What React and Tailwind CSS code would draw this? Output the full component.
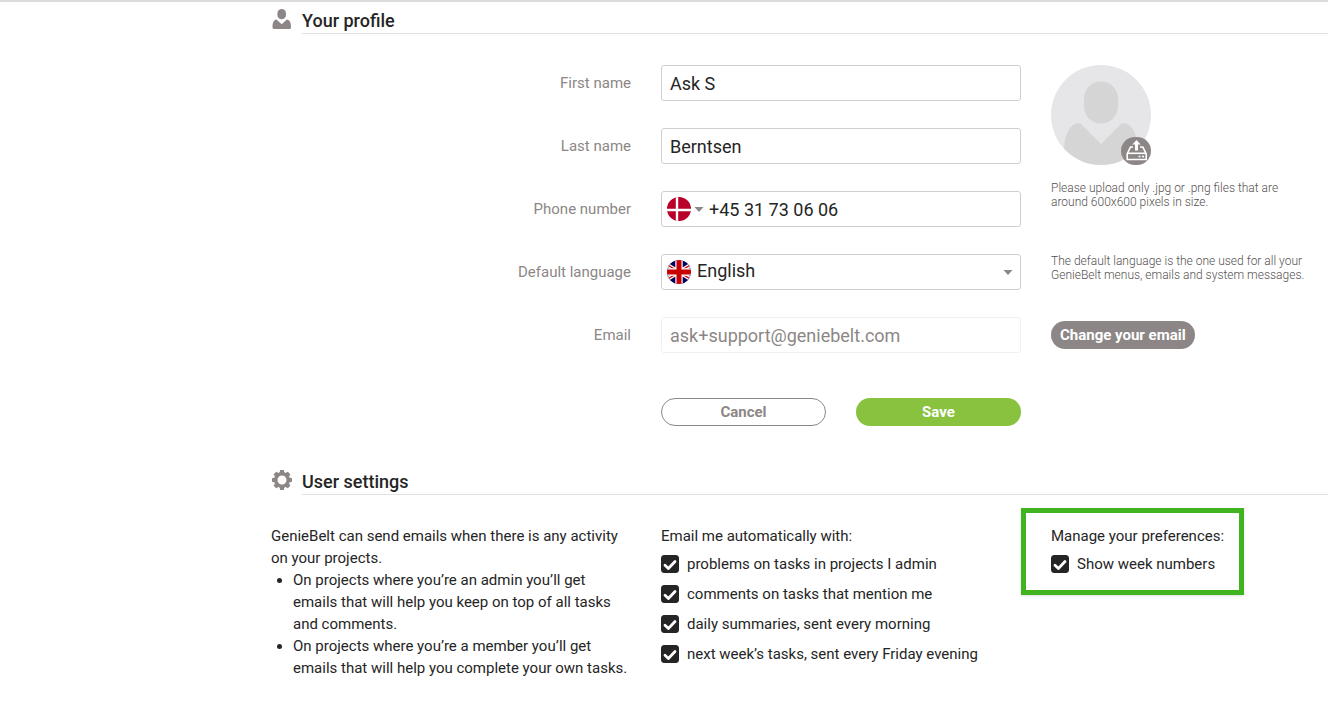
import React, { useState } from 'react'

const emailOptions = [
  { id: 'problems', label: 'problems on tasks in projects I admin' },
  { id: 'comments', label: 'comments on tasks that mention me' },
  { id: 'daily', label: 'daily summaries, sent every morning' },
  { id: 'weekly', label: 'next week’s tasks, sent every Friday evening' },
]

const UserIcon = () => (
  <svg viewBox="0 0 20 20" className="w-5 h-5" fill="#8c8786" aria-hidden="true">
    <rect x="5.4" y="0" width="8.6" height="10.2" rx="4.3" />
    <path d="M4.5 10.4 9.7 15.2 14.9 10.4C17.6 10.6 19 13.5 19 17.8V18.6Q19 20 17.6 20H1.9Q.5 20 .5 18.6V17.8C.5 13.5 1.8 10.6 4.5 10.4Z" />
  </svg>
)

const GearIcon = () => (
  <svg viewBox="-10 -10 20 20" className="w-5 h-5" aria-hidden="true">
    <circle r="6.2" fill="none" stroke="#8c8786" strokeWidth="3.4" />
    <g fill="#8c8786">
      {[0, 45, 90, 135, 180, 225, 270, 315].map((deg) => (
        <path key={deg} d="M-2.6 -7 -1.8 -10H1.8L2.6 -7Z" transform={`rotate(${deg})`} />
      ))}
    </g>
  </svg>
)

const DanishFlag = () => (
  <svg viewBox="0 0 24 24" className="w-6 h-6" aria-hidden="true">
    <clipPath id="dk"><circle cx="12" cy="12" r="12" /></clipPath>
    <g clipPath="url(#dk)">
      <rect width="24" height="24" fill="#b90028" />
      <path d="M10 0V24M0 13H24" stroke="#fff" strokeWidth="2.4" />
    </g>
  </svg>
)

const BritishFlag = () => (
  <svg viewBox="0 0 24 24" className="w-6 h-6" aria-hidden="true">
    <clipPath id="gb"><circle cx="12" cy="12" r="12" /></clipPath>
    <g clipPath="url(#gb)">
      <rect width="24" height="24" fill="#00005c" />
      <path d="M-4 2 28 22M28 2 -4 22" stroke="#fff" strokeWidth="4" />
      <path d="M-4 2 28 22M28 2 -4 22" stroke="#c80000" strokeWidth="1.2" />
      <path d="M12 0V24M0 12H24" stroke="#fff" strokeWidth="7.4" />
      <path d="M12 0V24M0 12H24" stroke="#c80000" strokeWidth="5" />
    </g>
  </svg>
)

const Caret = () => (
  <svg viewBox="0 0 10 5" className="w-[10px] h-[5px]" aria-hidden="true">
    <path d="M.5 0H9.5L5 5Z" fill="#8c8786" />
  </svg>
)

const Avatar = () => (
  <svg viewBox="0 0 100 100" className="w-[100px] h-[100px]" aria-hidden="true">
    <clipPath id="avatar"><circle cx="50" cy="50" r="50" /></clipPath>
    <g clipPath="url(#avatar)">
      <rect width="100" height="100" fill="#e6e6e8" />
      <rect x="33" y="16.5" width="34" height="42" rx="17" fill="#d5d5d5" />
      <path d="M29.5 58.5 50 79 70.5 58.5C80 57 86 67 87 84V100H13V84C14 67 20 57 29.5 58.5Z" fill="#d5d5d5" />
    </g>
  </svg>
)

const UploadIcon = () => (
  <svg viewBox="0 0 30 28" className="w-[30px] h-7" aria-hidden="true">
    <rect width="30" height="28" rx="14" fill="#8c8786" />
    <path d="M12 10H9.5L6.2 17V22.5H25.2V17L21.8 10H19" fill="none" stroke="#fff" strokeWidth="1.6" />
    <path d="M6.2 16.3H25.2" stroke="#fff" strokeWidth="1.6" />
    <path d="M15.5 3 19.7 7.5H17V13.5H14V7.5H11.3Z" fill="#fff" />
    <path d="M17.5 19.5H19.5M21 19.5H23" stroke="#fff" strokeWidth="1.5" />
  </svg>
)

const SectionTitle = ({ icon, children }) => (
  <div className="flex gap-[10px] pl-px">
    <div className="pt-[5px]">{icon}</div>
    <h2 className="flex-1 border-b border-[#e2e2e2] h-[30px] leading-[34px] text-lg font-medium">{children}</h2>
  </div>
)

const FieldLabel = ({ htmlFor, children }) => (
  <label htmlFor={htmlFor} className="self-center lg:text-right text-[15px] text-[#8c8786]">{children}</label>
)

const CheckOption = ({ id, label }) => {
  const [checked, setChecked] = useState(true)

  return (
    <label htmlFor={id} className="flex items-center gap-2 h-[30px] cursor-pointer">
      <span className="relative w-[18px] h-[18px] shrink-0">
        <input
          id={id}
          type="checkbox"
          checked={checked}
          onChange={(e) => setChecked(e.target.checked)}
          className="peer block appearance-none w-[18px] h-[18px] rounded-[3px] border border-[#252525] checked:bg-[#252525]"
        />
        <svg viewBox="0 0 18 18" className="absolute inset-0 hidden peer-checked:block pointer-events-none" aria-hidden="true">
          <path d="M4 10.2 7.4 13.4 14 6.6" fill="none" stroke="#fff" strokeWidth="2.8" strokeLinecap="round" strokeLinejoin="round" />
        </svg>
      </span>
      {label}
    </label>
  )
}

const inputStyle = 'w-full h-9 px-2 rounded-[3px] border border-[#cfcfcf] bg-white text-lg outline-none'
const columns = 'grid gap-x-[30px] lg:grid-cols-[minmax(0,360px)_minmax(0,360px)_minmax(0,1fr)]'

const App = () => {
  const [firstName, setFirstName] = useState('Ask S')
  const [lastName, setLastName] = useState('Berntsen')
  const [phone, setPhone] = useState('+45 31 73 06 06')
  const [language, setLanguage] = useState('en')

  return (
    <main className="border-t-2 border-[#dcdcdc] bg-white pl-4 lg:pl-[271px] pt-[2px] pb-7 font-['Roboto',sans-serif] text-[15px] leading-[22px] text-[#252525]">
      <SectionTitle icon={<UserIcon />}>Your profile</SectionTitle>

      <form onSubmit={(e) => e.preventDefault()} className={`${columns} gap-y-[27px] pt-[31px]`}>
        <FieldLabel htmlFor="firstName">First name</FieldLabel>
        <input id="firstName" type="text" value={firstName} onChange={(e) => setFirstName(e.target.value)} className={inputStyle} />
        <div className="lg:row-span-3 lg:h-[162px]">
          <div className="relative w-[100px]">
            <Avatar />
            <button type="button" aria-label="Upload picture" className="absolute right-0 bottom-0 cursor-pointer">
              <UploadIcon />
            </button>
          </div>
          <p className="mt-4 max-w-[260px] text-xs leading-[14px] font-light text-[#555150]">
            Please upload only .jpg or .png files that are around 600x600 pixels in size.
          </p>
        </div>

        <FieldLabel htmlFor="lastName">Last name</FieldLabel>
        <input id="lastName" type="text" value={lastName} onChange={(e) => setLastName(e.target.value)} className={inputStyle} />

        <FieldLabel htmlFor="phone">Phone number</FieldLabel>
        <div className="flex items-center h-9 pl-[5px] rounded-[3px] border border-[#cfcfcf]">
          <button type="button" aria-label="Country code" className="flex items-center gap-[3px] cursor-pointer">
            <DanishFlag />
            <Caret />
          </button>
          <input id="phone" type="tel" value={phone} onChange={(e) => setPhone(e.target.value)} className="flex-1 min-w-0 h-full pl-[5px] text-lg outline-none" />
        </div>

        <FieldLabel htmlFor="language">Default language</FieldLabel>
        <div className="relative">
          <select
            id="language"
            value={language}
            onChange={(e) => setLanguage(e.target.value)}
            className="appearance-none block w-full h-9 pl-[35px] pb-[2px] rounded-[3px] border border-[#cfcfcf] bg-white text-lg outline-none"
          >
            <option value="en">English</option>
          </select>
          <span className="absolute left-[6px] top-[6px] pointer-events-none"><BritishFlag /></span>
          <span className="absolute right-2 inset-y-0 flex items-center pointer-events-none"><Caret /></span>
        </div>
        <p className="max-w-[260px] text-xs leading-[14px] font-light text-[#555150]">
          The default language is the one used for all your GenieBelt menus, emails and system messages.
        </p>

        <FieldLabel htmlFor="email">Email</FieldLabel>
        <input
          id="email"
          type="email"
          disabled
          value="ask+support@geniebelt.com"
          className="w-full h-9 px-2 rounded-[3px] border border-[#f0f0f0] bg-white text-lg text-[#8c8786]"
        />
        <div className="flex items-center">
          <button type="button" className="h-7 px-[9px] rounded-full bg-[#8c8786] text-white font-bold cursor-pointer">
            Change your email
          </button>
        </div>

        <div className="lg:col-start-2 grid grid-cols-2 gap-[30px] pt-[18px]">
          <button type="button" className="h-7 rounded-full border border-[#8c8786] text-[#8c8786] font-bold cursor-pointer">Cancel</button>
          <button type="submit" className="h-7 rounded-full bg-[#88c23f] text-white font-bold cursor-pointer">Save</button>
        </div>
      </form>

      <div className="pt-[39px]">
        <SectionTitle icon={<GearIcon />}>User settings</SectionTitle>
      </div>

      <div className={`${columns} gap-y-6 pt-[30px]`}>
        <div>
          <p>GenieBelt can send emails when there is any activity on your projects.</p>
          <ul className="list-disc pl-[22px]">
            <li>On projects where you’re an admin you’ll get emails that will help you keep on top of all tasks and comments.</li>
            <li>On projects where you’re a member you’ll get emails that will help you complete your own tasks.</li>
          </ul>
        </div>

        <div>
          <p className="mb-[2px]">Email me automatically with:</p>
          {emailOptions.map((option) => (
            <CheckOption key={option.id} id={option.id} label={option.label} />
          ))}
        </div>

        <div className="relative w-fit h-fit">
          <p className="mb-[2px]">Manage your preferences:</p>
          <CheckOption id="weekNumbers" label="Show week numbers" />
          <div className="absolute -top-[17px] -bottom-4 -left-[30px] -right-5 border-[5px] border-[#3fb41f] shadow-sm pointer-events-none"></div>
        </div>
      </div>
    </main>
  )
}

export default App
